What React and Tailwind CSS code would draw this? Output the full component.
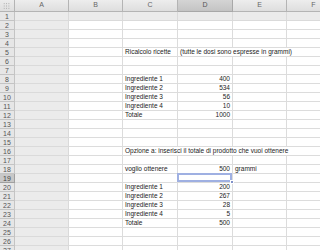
import React from "react";

const cols = ["A", "B", "C", "D", "E", "F"];

const data = {
  5: { C: { t: "Ricalcolo ricette" }, D: { t: "(tutte le dosi sono espresse in grammi)" } },
  8: { C: { t: "Ingrediente 1" }, D: { t: "400", n: true } },
  9: { C: { t: "Ingrediente 2" }, D: { t: "534", n: true } },
  10: { C: { t: "Ingrediente 3" }, D: { t: "56", n: true } },
  11: { C: { t: "Ingrediente 4" }, D: { t: "10", n: true } },
  12: { C: { t: "Totale" }, D: { t: "1000", n: true } },
  16: { C: { t: "Opzione a: inserisci il totale di prodotto che vuoi ottenere" } },
  18: { C: { t: "voglio ottenere" }, D: { t: "500", n: true }, E: { t: "grammi" } },
  20: { C: { t: "Ingrediente 1" }, D: { t: "200", n: true } },
  21: { C: { t: "Ingrediente 2" }, D: { t: "267", n: true } },
  22: { C: { t: "Ingrediente 3" }, D: { t: "28", n: true } },
  23: { C: { t: "Ingrediente 4" }, D: { t: "5", n: true } },
  24: { C: { t: "Totale" }, D: { t: "500", n: true } },
};

function Grip() {
  const dots = [];
  for (let r = 0; r < 3; r++)
    for (let c = 0; c < 3; c++)
      dots.push(<rect key={r * 3 + c} x={4 + c * 2.5} y={3 + r * 2.5} width="1" height="1" fill="#a8a8a8" />);
  return (
    <svg width="15" height="12" viewBox="0 0 15 12">
      {dots}
    </svg>
  );
}

export default function App() {
  const rows = [];
  for (let r = 1; r <= 27; r++) rows.push(r);

  return (
    <div
      className="w-[320px] h-[250px] overflow-hidden bg-white text-[#222]"
      style={{ fontFamily: '"Liberation Sans", Arial, sans-serif' }}
    >
      <div className="grid grid-cols-[15px_54px_54px_55px_55px_54px_54px_40px] grid-rows-[12px] auto-rows-[9px] w-[381px]">
        <div className="border-r border-b border-[#b4b4b4] bg-gradient-to-b from-[#ececec] to-[#dedede] flex items-center justify-center">
          <Grip />
        </div>
        {cols.map((c) => (
          <div
            key={c}
            className={
              c === "D"
                ? "border-r border-b border-[#a8a8a8] bg-gradient-to-b from-[#d4d4d4] to-[#c4c4c4] flex items-center justify-center text-[7px] text-[#555]"
                : "border-r border-b border-[#b4b4b4] bg-gradient-to-b from-[#ededed] to-[#dedede] flex items-center justify-center text-[7px] text-[#666]"
            }
          >
            {c}
          </div>
        ))}
        <div className="border-b border-[#b4b4b4] bg-gradient-to-b from-[#ededed] to-[#dedede]"></div>

        {rows.map((r) => (
          <React.Fragment key={r}>
            <div
              className={
                r === 19
                  ? "border-r border-b border-[#a0a0a0] bg-[#c8c8c8] flex items-center justify-center text-[7px] leading-none text-[#444]"
                  : "border-r border-b border-[#c4c4c4] bg-[#e6e6e6] flex items-center justify-center text-[7px] leading-none text-[#555]"
              }
            >
              {r}
            </div>
            {cols.map((c) => {
              const cell = data[r] && data[r][c];
              const gray = c === "A" || r === 1;
              const sel = r === 19 && c === "D";
              return (
                <div
                  key={c}
                  className={
                    gray
                      ? "relative border-r border-b border-[#dadada] bg-[#ebebeb] text-[6.5px] leading-[8px]"
                      : "relative border-r border-b border-[#dcdcdc] text-[6.5px] leading-[8px]"
                  }
                >
                  {cell && (
                    <span
                      className={
                        cell.n
                          ? "absolute right-[2px] top-0 z-10 whitespace-nowrap"
                          : "absolute left-[2px] top-0 z-10 whitespace-nowrap bg-white pr-[1px]"
                      }
                    >
                      {cell.t}
                    </span>
                  )}
                  {sel && (
                    <>
                      <div className="absolute -left-[1px] -top-[1px] right-0 bottom-0 border-2 border-[#9fb0e2] z-20"></div>
                      <div className="absolute -right-[2px] -bottom-[2px] w-[4px] h-[4px] bg-[#7f90c8] border border-white z-30"></div>
                    </>
                  )}
                </div>
              );
            })}
            <div className="border-b border-[#dcdcdc]"></div>
          </React.Fragment>
        ))}
      </div>
    </div>
  );
}
